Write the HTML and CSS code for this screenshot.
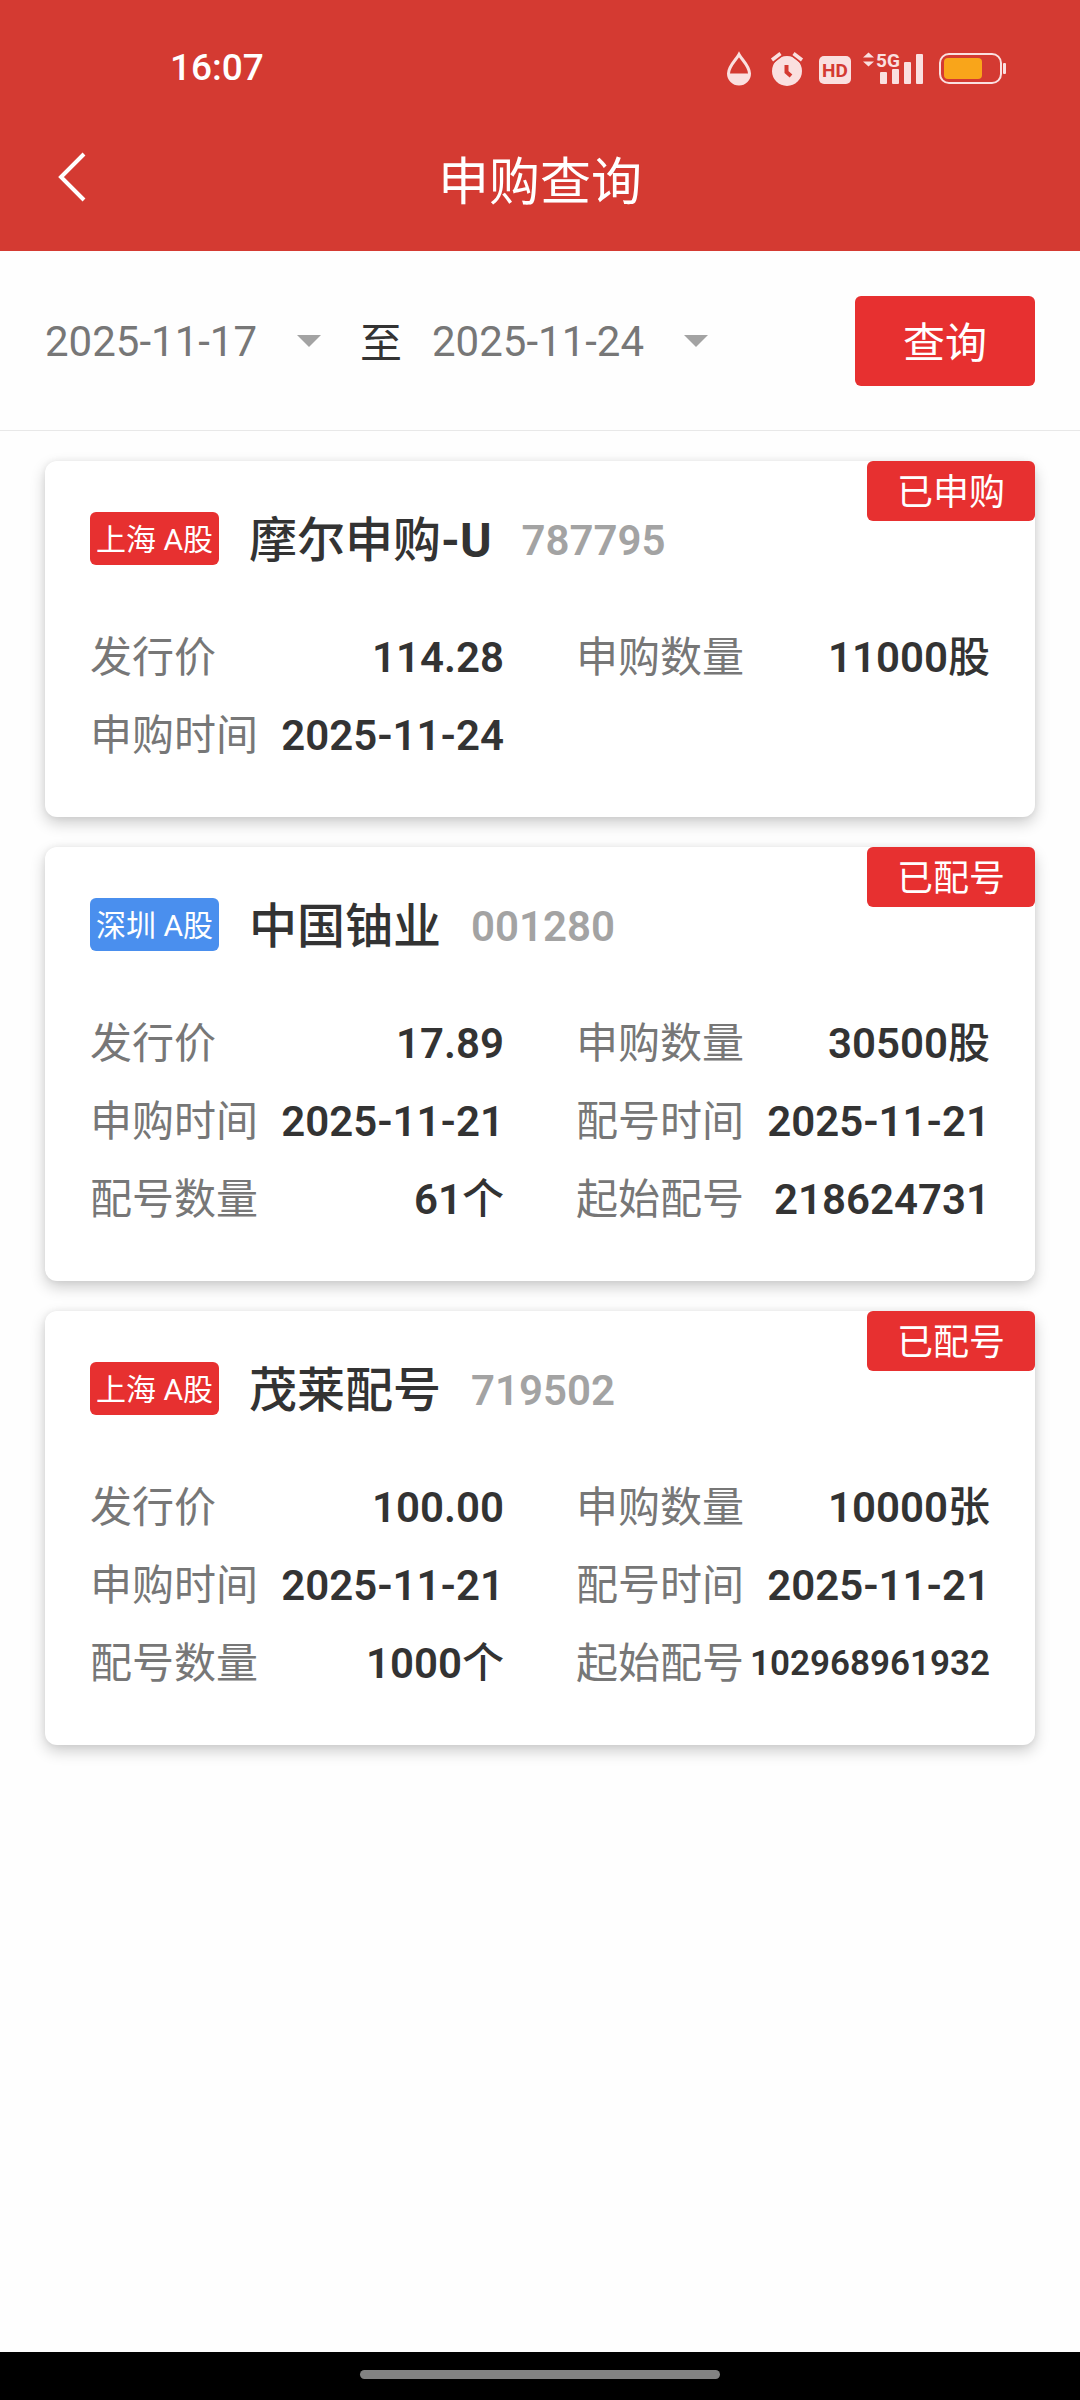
FILE: index.html
```
<!DOCTYPE html>
<html lang="zh-CN">
<head>
    <meta charset="UTF-8">
    <meta name="viewport" content="width=device-width, initial-scale=1.0">
    <link rel="stylesheet" href="styles.css">
    <title>申购查询</title>
</head>
<body>
    <header class="header">
        <div class="status-bar">
            <span class="clock">16:07</span>
            <div class="status-icons">
                <svg width="33" height="34" viewBox="0 0 33 34">
                    <path d="M13 2.5C10 8 2.5 14 2.5 21.5a10.5 10.5 0 0 0 21 0C23.5 14 16 8 13 2.5z" fill="none" stroke="#fae0e0" stroke-width="3"/>
                    <path d="M2 21.5h22a11 11 0 0 1-22 0z" fill="#fae0e0"/>
                </svg>
                <svg width="36" height="34" viewBox="0 0 36 34">
                    <circle cx="16" cy="19" r="15" fill="#fae0e0"/>
                    <path d="M1 8l8.500-6.500M22.500 1.500l8.500 6.500" stroke="#d43a32" stroke-width="7"/>
                    <path d="M1 8l8.500-6.500M22.500 1.500l8.500 6.500" stroke="#fae0e0" stroke-width="3.500"/>
                    <path d="M15.500 13v7l4.500 4" fill="none" stroke="#d43a32" stroke-width="4"/>
                </svg>
                <svg width="32" height="34" viewBox="0 0 32 34">
                    <rect x="0" y="4" width="32" height="28" rx="5" fill="#fae0e0"/>
                    <text x="16" y="25" text-anchor="middle" class="hd-text">HD</text>
                </svg>
                <svg width="64" height="34" viewBox="0 0 64 34">
                    <path d="M0 5.500l5.500-5 5.500 5zM0 9.500h11l-5.500 5z" fill="#fae0e0"/>
                    <text x="13" y="15" class="net-text">5G</text>
                    <rect x="17" y="20" width="7" height="12" rx="1" fill="#fae0e0"/>
                    <rect x="29" y="17" width="7" height="15" rx="1" fill="#fae0e0"/>
                    <rect x="41" y="10" width="7" height="22" rx="1" fill="#fae0e0"/>
                    <rect x="53" y="2" width="7" height="30" rx="1" fill="#fae0e0"/>
                </svg>
                <svg width="67" height="34" viewBox="0 0 67 34">
                    <rect x="1" y="2" width="61" height="29" rx="9" fill="none" stroke="#fae0e0" stroke-width="2"/>
                    <rect x="5" y="6" width="38" height="21" rx="4" fill="#f9a51a"/>
                    <rect x="64" y="11" width="3" height="11" rx="1" fill="#fae0e0"/>
                </svg>
            </div>
        </div>
        <div class="title-bar">
            <button class="back" aria-label="返回">
                <svg width="30" height="50" viewBox="0 0 30 50">
                    <path d="M28 2L5 25l23 23" fill="none" stroke="#fff" stroke-width="4"/>
                </svg>
            </button>
            <h1>申购查询</h1>
        </div>
    </header>

    <form class="filter">
        <div class="date-select">
            <select aria-label="开始日期">
                <option>2025-11-17</option>
            </select>
        </div>
        <span class="to">至</span>
        <div class="date-select">
            <select aria-label="结束日期">
                <option>2025-11-24</option>
            </select>
        </div>
        <button type="button" class="query">查询</button>
    </form>

    <main class="list">
        <section class="card">
            <span class="state">已申购</span>
            <div class="card-title">
                <span class="market sh">上海 A股</span>
                <h2>摩尔申购<b>-U</b></h2>
                <span class="code">787795</span>
            </div>
            <dl class="info">
                <div><dt>发行价</dt><dd>114.28</dd></div>
                <div><dt>申购数量</dt><dd>11000<span class="unit">股</span></dd></div>
                <div><dt>申购时间</dt><dd>2025-11-24</dd></div>
            </dl>
        </section>

        <section class="card">
            <span class="state">已配号</span>
            <div class="card-title">
                <span class="market sz">深圳 A股</span>
                <h2>中国铀业</h2>
                <span class="code">001280</span>
            </div>
            <dl class="info">
                <div><dt>发行价</dt><dd>17.89</dd></div>
                <div><dt>申购数量</dt><dd>30500<span class="unit">股</span></dd></div>
                <div><dt>申购时间</dt><dd>2025-11-21</dd></div>
                <div><dt>配号时间</dt><dd>2025-11-21</dd></div>
                <div><dt>配号数量</dt><dd>61<span class="unit">个</span></dd></div>
                <div><dt>起始配号</dt><dd>218624731</dd></div>
            </dl>
        </section>

        <section class="card">
            <span class="state">已配号</span>
            <div class="card-title">
                <span class="market sh">上海 A股</span>
                <h2>茂莱配号</h2>
                <span class="code">719502</span>
            </div>
            <dl class="info">
                <div><dt>发行价</dt><dd>100.00</dd></div>
                <div><dt>申购数量</dt><dd>10000<span class="unit">张</span></dd></div>
                <div><dt>申购时间</dt><dd>2025-11-21</dd></div>
                <div><dt>配号时间</dt><dd>2025-11-21</dd></div>
                <div><dt>配号数量</dt><dd>1000<span class="unit">个</span></dd></div>
                <div><dt>起始配号</dt><dd class="long">102968961932</dd></div>
            </dl>
        </section>
    </main>

    <footer class="gesture-bar">
        <div class="handle"></div>
    </footer>
</body>
</html>
```

FILE: styles.css
```
* {
    box-sizing: border-box;
}

body {
    display: flex;
    flex-direction: column;
    min-height: 100vh;
    margin: 0;
    background-color: #fefefe;
    color: #333;
    font-family: Roboto, "Noto Sans CJK SC", sans-serif;
    font-size: 42px;
    line-height: 1.2;
}

button,
select {
    font: inherit;
    border: none;
    padding: 0;
    cursor: pointer;
}

/* Red header with status bar and page title */
.header {
    background-color: #d43a32;
    color: white;
}

.status-bar {
    display: flex;
    justify-content: space-between;
    align-items: center;
    height: 111px;
    padding: 26px 74px 0 170px;
}

.clock {
    font-size: 37px;
    font-weight: 500;
}

.status-icons {
    display: flex;
    gap: 12px;
}

.status-icons svg {
    overflow: visible;
}

.hd-text {
    font-size: 19px;
    font-weight: bold;
    fill: #d43a32;
}

.net-text {
    font-size: 19px;
    font-weight: bold;
    fill: #fae0e0;
}

.title-bar {
    display: grid;
    grid-template-columns: 86px 1fr 86px;
    align-items: center;
    height: 140px;
}

.back {
    display: flex;
    justify-content: flex-end;
    height: 58px;
    background: none;
}

h1 {
    margin: 0;
    padding-top: 4px;
    font-size: 51px;
    font-weight: 400;
    text-align: center;
}

/* Date range filter */
.filter {
    display: flex;
    align-items: center;
    padding: 45px 45px 44px;
    border-bottom: 1px solid #e8e8e8;
}

.date-select {
    position: relative;
    width: 276px;
}

.date-select::after {
    content: "";
    position: absolute;
    right: 0;
    top: 50%;
    margin-top: -6px;
    border: 12px solid transparent;
    border-top-color: #a3a3a3;
    border-bottom: none;
    pointer-events: none;
}

select {
    width: 100%;
    padding-top: 2px;
    appearance: none;
    background: none;
    color: #777;
}

.to {
    margin: 0 30px 0 39px;
    padding-top: 6px;
}

.query {
    width: 180px;
    height: 90px;
    margin-left: auto;
    padding-top: 6px;
    border-radius: 6px;
    background-color: #e73030;
    color: white;
}

/* Subscription cards */
.list {
    flex: 1;
    display: flex;
    flex-direction: column;
    gap: 30px;
    padding: 30px 45px;
}

.card {
    position: relative;
    padding: 45px;
    border-radius: 12px;
    background-color: white;
    box-shadow: 0 6px 15px rgba(0, 0, 0, 0.2), 0 0 6px rgba(0, 0, 0, 0.06);
}

.state {
    position: absolute;
    top: 0;
    right: 0;
    padding: 4px 30px 0;
    border-radius: 6px;
    background-color: #e73030;
    color: white;
    font-size: 36px;
    line-height: 56px;
}

.card-title {
    display: flex;
    align-items: center;
    gap: 30px;
    height: 64px;
    margin-bottom: 46px;
}

.market {
    padding: 2px 6px 0;
    border-radius: 6px;
    color: white;
    font-size: 30px;
    line-height: 51px;
    white-space: nowrap;
}

.sh {
    background-color: #e73030;
}

.sz {
    background-color: #4a8fee;
}

h2 {
    margin: 0;
    padding-top: 6px;
    font-size: 48px;
    font-weight: 500;
}

.code {
    padding-top: 6px;
    color: #a3a3a3;
    font-weight: 600;
}

.info {
    display: grid;
    grid-template-columns: 1fr 1fr;
    column-gap: 72px;
    margin: 0;
}

.info div {
    display: flex;
    justify-content: space-between;
    align-items: center;
    height: 78px;
    padding-top: 6px;
    white-space: nowrap;
}

dt {
    color: #777;
}

dd {
    margin: 0;
    font-weight: 600;
}

.unit {
    font-weight: 500;
}

.long {
    font-size: 35px;
}

/* Gesture bar at the bottom of the screen */
.gesture-bar {
    display: flex;
    justify-content: center;
    height: 48px;
    padding-top: 18px;
    background-color: black;
}

.handle {
    width: 360px;
    height: 9px;
    border-radius: 5px;
    background-color: #828282;
}
```
